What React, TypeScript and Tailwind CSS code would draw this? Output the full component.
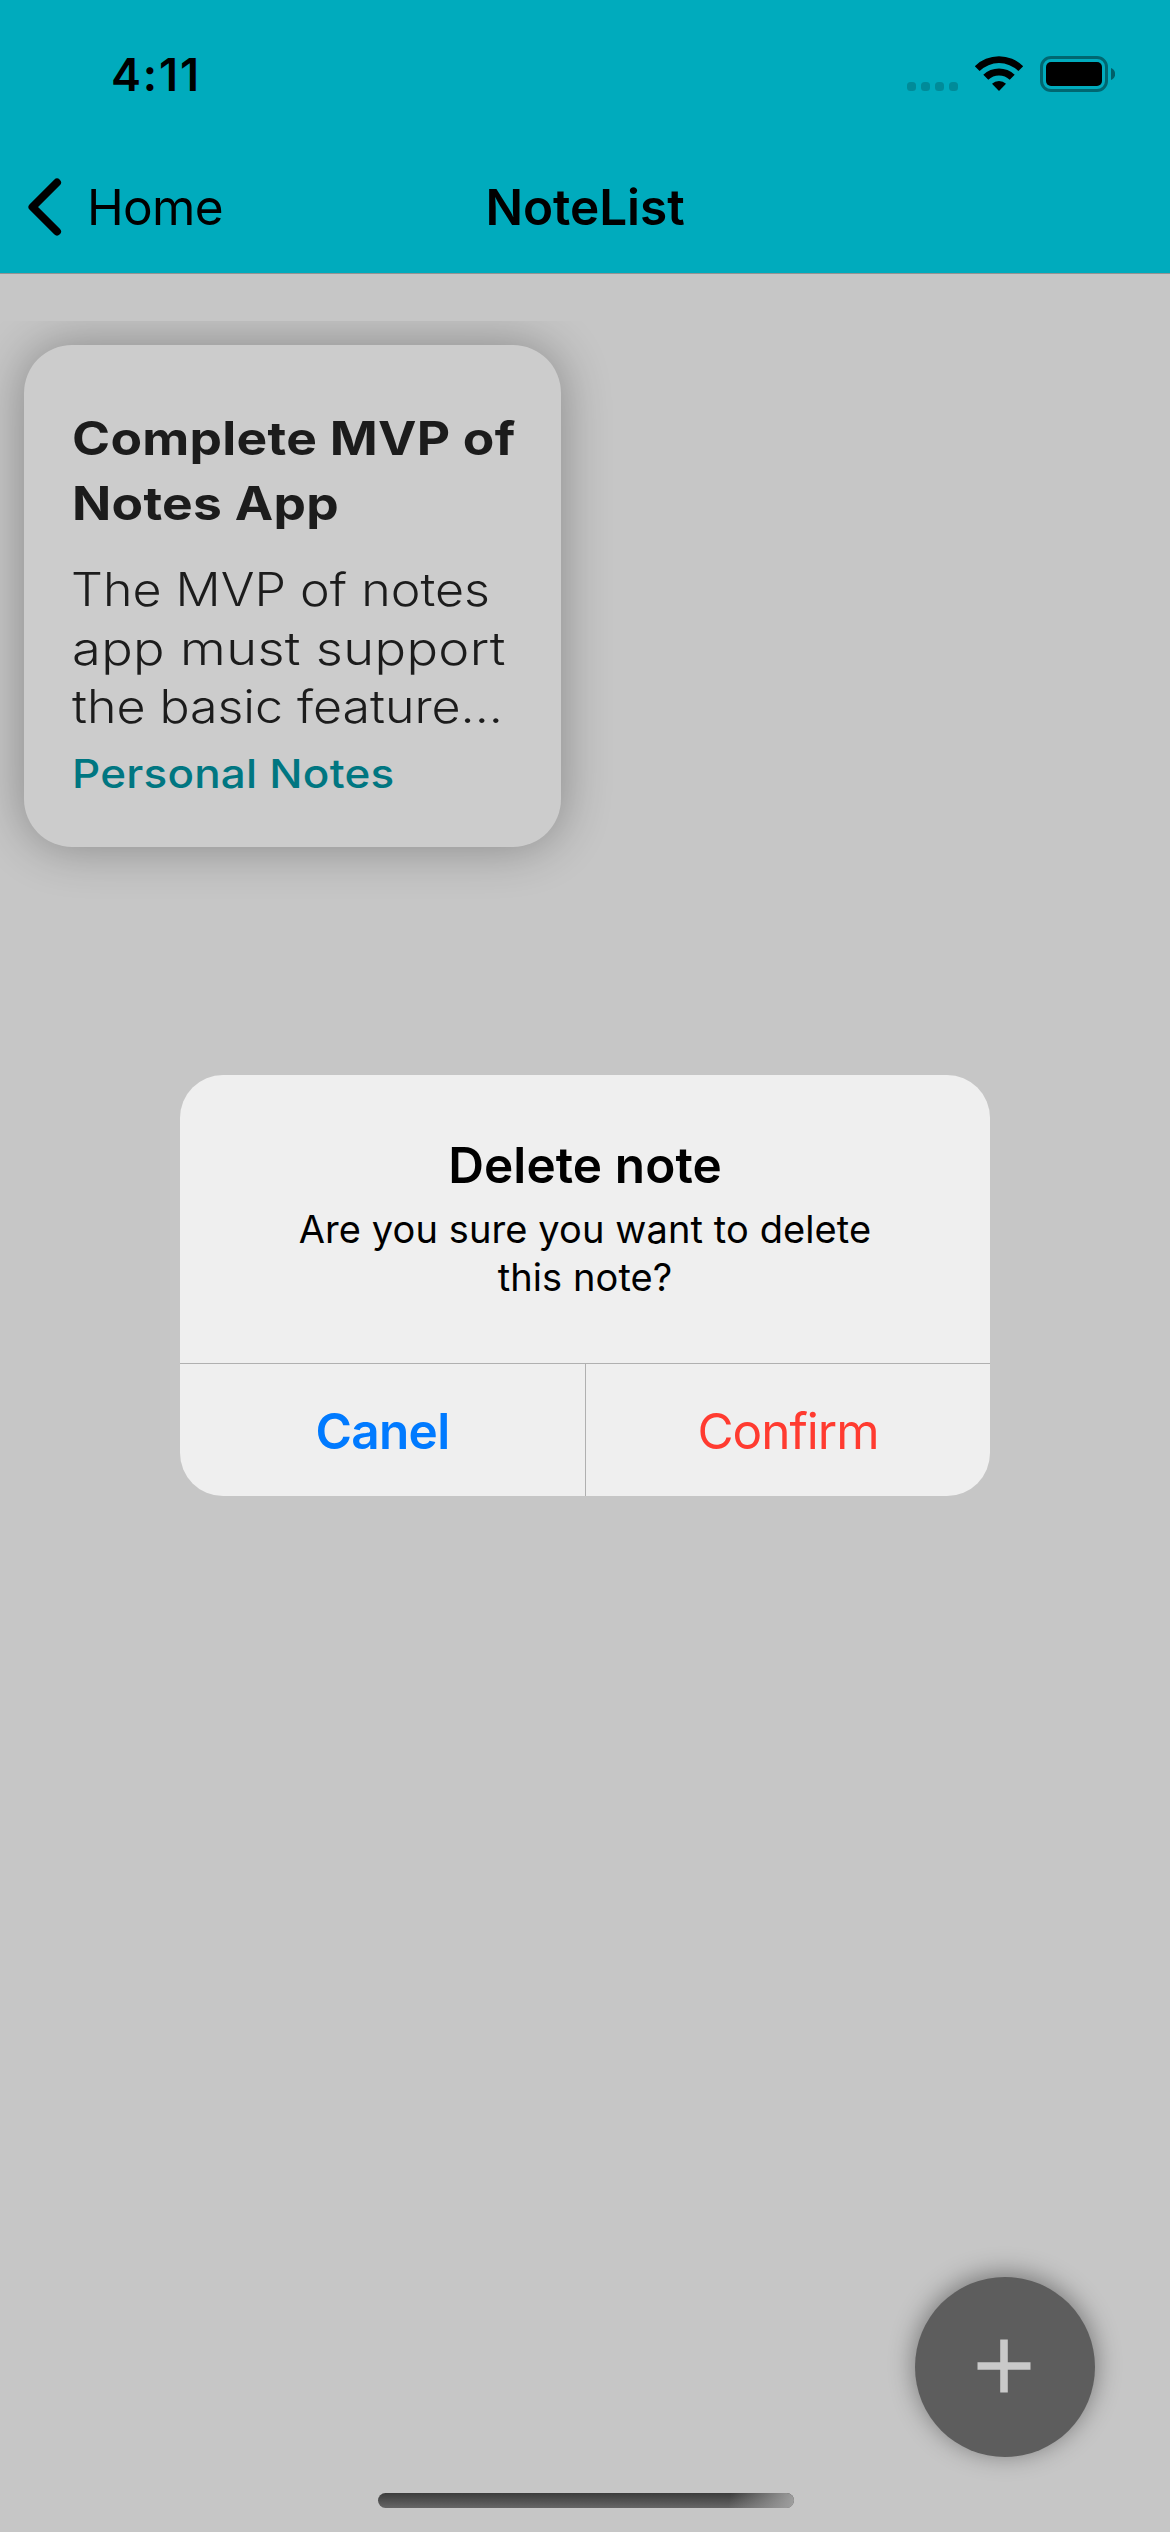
function StatusBar() {
  return (
    <div className="flex h-[141px] items-start justify-between pl-[111px] pr-[55px]">
      <span className="mt-[52px] text-[45px] leading-[45px] font-semibold tracking-[1.88px]">4:11</span>
      <div className="mt-[55px] flex items-start">
        <div className="mt-[27px] flex gap-[5px]">
          <i className="size-[9px] rounded-[3.5px] bg-[#008b99]" />
          <i className="size-[9px] rounded-[3.5px] bg-[#008b99]" />
          <i className="size-[9px] rounded-[3.5px] bg-[#008b99]" />
          <i className="size-[9px] rounded-[3.5px] bg-[#008b99]" />
        </div>
        <svg className="ml-[16px] h-[37px] w-[50px]" viewBox="0 0 50 37">
          <path d="M.8 11.200a34.500 34.500 0 0 1 48.400 0l-4.800 4.800a27.700 27.700 0 0 0-38.800 0z" />
          <path d="M9.300 19.800a22.400 22.400 0 0 1 31.400 0l-5 5a15.400 15.400 0 0 0-21.400 0z" />
          <path d="M18 28.800a10 10 0 0 1 14 0L25 36z" />
        </svg>
        <svg className="ml-[16px] mt-px h-[36px] w-[75px]" viewBox="0 0 75 36">
          <rect x="1.5" y="1.5" width="65" height="33" rx="9.5" fill="none" stroke="#006771" strokeWidth="3" />
          <rect x="6" y="6" width="56" height="24" rx="5" />
          <path d="M71 12c2.600 1 4.200 3.300 4.200 6s-1.600 5-4.200 6z" fill="#005f69" />
        </svg>
      </div>
    </div>
  );
}

function NavBar() {
  return (
    <div className="grid h-[132px] grid-cols-3 items-center">
      <div className="flex items-center pl-[28px]">
        <svg className="h-[58px] w-[34px]" viewBox="0 0 34 58" fill="none" stroke="black" strokeWidth="8" strokeLinecap="round" strokeLinejoin="round">
          <path d="M29 4.500 4.500 29 29 53.500" />
        </svg>
        <span className="ml-[25px] text-[49.5px] leading-[60px] tracking-[-0.68px]">Home</span>
      </div>
      <h1 className="text-center text-[49.5px] leading-[60px] font-semibold tracking-[-0.05px]">NoteList</h1>
    </div>
  );
}

function NoteCard() {
  return (
    <article className="h-[502px] w-[537px] rounded-[48px] bg-[#cccccc] pt-[61px] pl-[48px] whitespace-nowrap text-[#1c1c1c] shadow-[0_0_50px_rgba(0,0,0,0.32)]">
      <h2 className="w-fit origin-left scale-x-112 text-[46px] leading-[65px] font-bold tracking-[0.25px]">
        Complete MVP of
        <br />
        Notes App
      </h2>
      <p className="mt-[24px] flex flex-col items-start text-[46px] leading-[58.5px] font-[340]">
        <span className="-ml-px origin-left scale-x-109">The MVP of notes</span>
        <span className="origin-left scale-x-114 tracking-[0.3px]">app must support</span>
        <span className="origin-left scale-x-109 tracking-[-0.05px]">the basic feature...</span>
      </p>
      <p className="mt-[12px] w-fit origin-left scale-x-110 text-[40px] leading-[51px] font-[470] tracking-[0.2px] text-[#007681]">
        Personal Notes
      </p>
    </article>
  );
}

function DeleteDialog() {
  return (
    <div role="dialog" className="absolute top-[1075px] left-[180px] flex h-[421px] w-[810px] flex-col overflow-hidden rounded-[43px] bg-[#efefef]">
      <div className="h-[288px] pt-[60px] text-center">
        <h2 className="text-[49.5px] leading-[60px] font-semibold tracking-[0.09px]">Delete note</h2>
        <p className="mt-[10px] text-[38px] leading-[48px] tracking-[0.1px]">
          Are you sure you want to delete
          <br />
          this note?
        </p>
      </div>
      <div className="flex flex-1 border-t border-[#b0b0b0] text-[49.5px] leading-[60px]">
        <button className="w-[406px] border-r border-[#b0b0b0] pt-px font-semibold tracking-[-0.71px] text-[#007aff]">Canel</button>
        <button className="flex-1 pt-px tracking-[-1.02px] text-[#ff3b30]">Confirm</button>
      </div>
    </div>
  );
}

export default function App() {
  return (
    <div className="relative flex h-[2532px] w-[1170px] flex-col overflow-hidden bg-[#c6c6c6] font-[Inter,sans-serif] text-black">
      <header className="h-[274px] shrink-0 border-b border-[#949494] bg-[#00abbd]">
        <StatusBar />
        <NavBar />
      </header>
      <main className="mt-[47px] flex-1 overflow-hidden pt-[24px] pl-[24px]">
        <NoteCard />
      </main>
      <DeleteDialog />
      <button className="absolute top-[2277px] left-[915px] size-[180px] rounded-full bg-[#5d5d5d] shadow-[0_-3px_26px_rgba(0,0,0,0.42)]">
        <svg className="absolute top-[62px] left-[62px] size-[54px]" viewBox="0 0 54 54" stroke="#c9c9c9" strokeWidth="7.600">
          <path d="M.5 27h53M27 .5v53" />
        </svg>
      </button>
      <div className="absolute top-[2493px] left-[378px] h-[15px] w-[416px] overflow-hidden rounded-full bg-linear-to-b from-[#3c3c3c] to-[#666666]">
        <div className="ml-auto h-full w-[80px] bg-[linear-gradient(100deg,transparent_20%,#a0a0a0)]" />
      </div>
    </div>
  );
}
